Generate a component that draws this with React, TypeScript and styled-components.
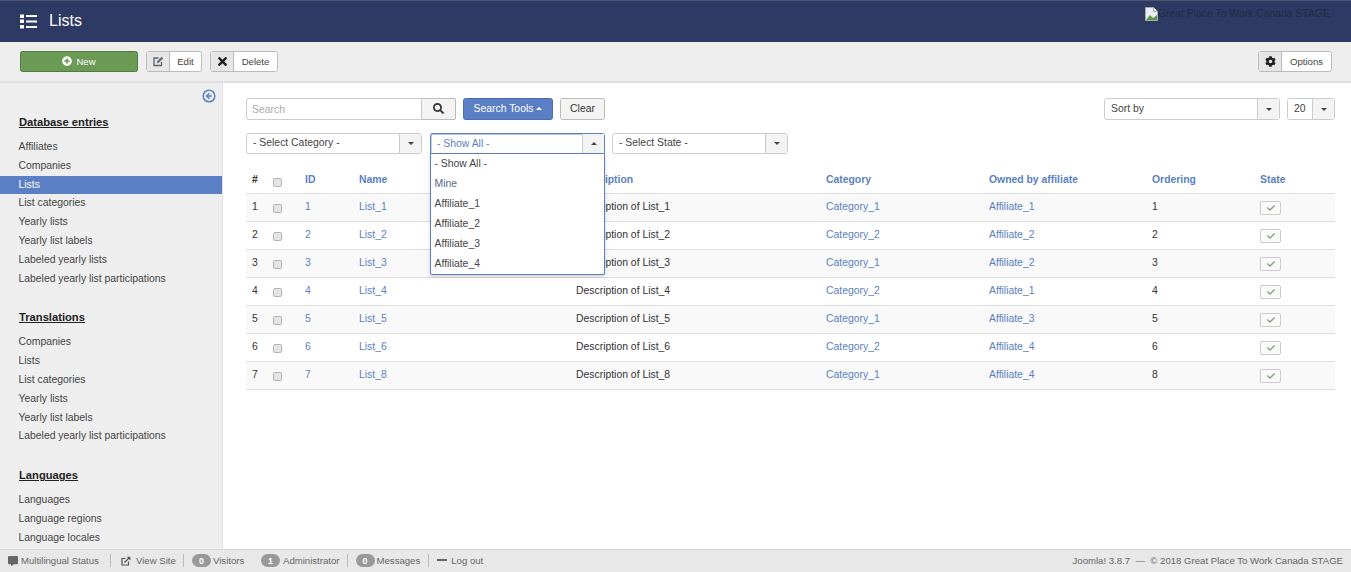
import React from "react";
import styled, { createGlobalStyle } from "styled-components";
import { FaCheck, FaCog, FaCommentAlt, FaPlusCircle, FaSearch, FaTimes } from "react-icons/fa";
import { ArrowLeftCircle } from "lucide-react";

const Global = createGlobalStyle`
  html, body { margin: 0; padding: 0; background: #fff; }
  body { font-family: "Liberation Sans", Arial, sans-serif; font-size: 10.4px; color: #333; }
  * { box-sizing: border-box; }
`;
const Page = styled.div`
  width: 1351px; height: 572px; overflow: hidden;
  display: grid; grid-template-rows: 42px 41px 1fr 23px;
`;
const Header = styled.header`
  background: #2d3a63; border-top: 1px solid #4d5672;
  display: flex; justify-content: space-between; align-items: flex-start;
  padding: 0 21px 0 20px; color: #fff;
`;
const Title = styled.div`display: flex; align-items: center; gap: 12px; font-size: 16px; height: 40px;`;
const Logo = styled.div`
  display: flex; align-items: center; margin-top: 6px; color: #232b47; font-size: 10.4px; line-height: 14px; white-space: nowrap;
`;
const Toolbar = styled.div`
  background: #eee; border-bottom: 2px solid #e0e0e0; display: flex; align-items: center;
  padding: 0 19px 1px 20px; gap: 8px;
`;
const NewButton = styled.div`
  width: 118px; height: 21px; background: #6a9a53; border: 1px solid #4e7d3c; border-radius: 2.5px;
  display: flex; align-items: center; justify-content: center; gap: 4px; color: #fff; font-size: 9.6px;
`;
const ToolButton = styled.div<{ $last?: boolean }>`
  display: flex; height: 21px; background: #fff; border: 1px solid #bbb; border-radius: 2.5px;
  font-size: 9.6px; color: #444; ${p => p.$last ? "margin-left: auto;" : ""}
`;
const ToolIcon = styled.span<{ $w: number }>`
  width: ${p => p.$w}px; background: #e6e6e6; border-right: 1px solid #bbb; display: flex; align-items: center; justify-content: center; color: #444;
`;
const ToolLabel = styled.span<{ $w: number }>`width: ${p => p.$w}px; display: flex; align-items: center; justify-content: center;`;
const Body = styled.div`display: flex; min-height: 0;`;
const Sidebar = styled.aside`
  position: relative; width: 223px; flex: none; background: #eee; border-right: 1px solid #e2e2e2; padding-top: 31px; overflow: hidden;
`;
const Collapse = styled.span`position: absolute; left: 202px; top: 6px; color: #5a7fc4; display: flex;`;
const SideHeading = styled.div<{ $first?: boolean }>`
  font-weight: bold; font-size: 11.2px; line-height: 16px; text-decoration: underline; color: #222; padding-left: 19px; margin-bottom: 8px;
  margin-top: ${p => p.$first ? 0 : 21}px;
`;
const SideItem = styled.div<{ $active?: boolean }>`
  height: 18.8px; line-height: 18.8px; padding-left: 18.5px; color: ${p => p.$active ? "#fff" : "#444"};
  background: ${p => p.$active ? "#5a7fc4" : "transparent"};
`;
const Content = styled.main`position: relative; flex: 1; padding: 15px 16px 0 23px; min-width: 0;`;
const Row = styled.div<{ $spaced?: boolean }>`display: flex; align-items: flex-start; ${p => p.$spaced ? "margin-top: 13px;" : ""}`;
const SearchInput = styled.div`
  width: 176px; height: 22px; border: 1px solid #ccc; border-radius: 2.5px 0 0 2.5px; background: #fff;
  color: #aaa; padding-left: 5px; line-height: 21px;
`;
const SearchBtn = styled.div`
  width: 34px; height: 22px; background: #f3f3f3; border: 1px solid #bbb; border-left: none; border-radius: 0 2.5px 2.5px 0;
  display: flex; align-items: center; justify-content: center; color: #333; margin-right: 7px; padding-bottom: 2px;
`;
const PrimaryBtn = styled.div`
  width: 90px; height: 22px; background: #5a7fc4; border: 1px solid #4a6fb4; border-radius: 2.5px; color: #fff;
  display: flex; align-items: center; justify-content: center; gap: 3px; margin-right: 7px; padding-bottom: 2px;
`;
const UpCaret = styled.i<{ $color?: string }>`
  width: 0; height: 0; border-left: 3px solid transparent; border-right: 3px solid transparent; border-bottom: 3px solid ${p => p.$color || "#fff"};
`;
const DownCaret = styled.i`
  width: 0; height: 0; border-left: 3.5px solid transparent; border-right: 3.5px solid transparent; border-top: 3.5px solid #444;
`;
const ClearBtn = styled.div`
  width: 45px; height: 22px; background: #f3f3f3; border: 1px solid #bbb; border-radius: 2.5px; display: flex; align-items: center; justify-content: center; color: #333; padding-bottom: 2px;
`;
const Select = styled.div<{ $w: number; $open?: boolean; $ml?: number; $h?: number }>`
  position: relative; width: ${p => p.$w}px; height: ${p => p.$h || 21}px; display: flex; background: #fff; border-radius: 2.5px;
  border: 1px solid ${p => p.$open ? "#5a7fc4" : "#ccc"}; margin-left: ${p => p.$ml || 0}px; color: ${p => p.$open ? "#5a7fc4" : "#444"};
  ${p => p.$open ? "border-bottom-left-radius:0;border-bottom-right-radius:0;box-shadow:inset 0 1px 0 rgba(90,127,196,.45),inset 1px 0 0 rgba(90,127,196,.35);" : ""}
`;
const SelectText = styled.span<{ $low?: boolean }>`flex: 1; padding-left: 6px; line-height: ${p => p.$low ? 20 : 18}px;`;
const SelectArrow = styled.span<{ $w?: number }>`
  width: ${p => p.$w || 22}px; background: #f3f3f3; border-left: 1px solid #ccc; display: flex; align-items: center; justify-content: center;
`;
const Menu = styled.div`
  position: absolute; left: -1px; top: 20px; width: 175px; height: 121px; background: #fff; border: 1px solid #5a7fc4; border-top: none;
  border-radius: 0 0 2.5px 2.5px; box-shadow: 0 2px 4px rgba(0,0,0,.15); z-index: 2; color: #444;
`;
const MenuItem = styled.div<{ $blue?: boolean }>`height: 20px; line-height: 20px; padding-left: 3.5px; color: ${p => p.$blue ? "#56678f" : "#444"};`;
const Table = styled.table`
  width: 1089px; table-layout: fixed; border-collapse: collapse; margin-top: 15px; font-size: 10.4px; color: #333;
  th { height: 24px; text-align: left; font-weight: bold; color: #5a7fc4; padding: 0 6px 2px; }
  th:first-child { color: #333; }
  td { height: 28px; padding: 0 6px 2px; border-top: 1px solid #ddd; color: #333; }
  tr:last-child td { border-bottom: 1px solid #ddd; }
  tbody tr:nth-child(odd) td { background: #f9f9f9; }
  a { color: #5a7fc4; }
`;
const Check = styled.span`
  display: block; width: 9px; height: 9px; margin: 5px 0 0 0; background: #e4e4e4; border: 1px solid #b5b5b5; border-radius: 2px;
`;
const StateBtn = styled.span`
  display: flex; width: 21px; height: 14px; margin-top: 4px; border: 1px solid #ccc; border-radius: 2px; background: #fafafa; color: #8aa582;
  align-items: center; justify-content: center;
`;
const Footer = styled.footer`
  background: #e8e8e8; border-top: 1px solid #d8d8d8; display: flex; align-items: center; padding: 0 8px 1px 8px; color: #666; font-size: 9.6px; white-space: nowrap;
`;
const FootItem = styled.span<{ $sep?: boolean; $w?: number; $pl?: number; $pr?: number; $gap?: number }>`
  display: flex; align-items: center; gap: ${p => p.$gap ?? 3}px; height: 13px;
  padding-left: ${p => p.$pl || 0}px; padding-right: ${p => p.$pr || 0}px;
  ${p => p.$w ? `width: ${p.$w}px;` : ""}
  ${p => p.$sep ? "border-right: 1px solid #bbb;" : ""}
`;
const Badge = styled.span`
  width: 19px; height: 13px; border-radius: 7px; background: #999; color: #fff; font-weight: bold; font-size: 8.8px;
  display: flex; align-items: center; justify-content: center; flex: none;
`;
const Dash = styled.i`width: 10px; height: 2px; background: #666; display: block; margin-top: -2px;`;
const Copy = styled.span`margin-left: auto;`;

const ListIcon = () => (
  <svg width="17" height="15" viewBox="0 0 17 15" fill="#fff">
    <rect x="0" y="0.5" width="4" height="3.5" /><rect x="0" y="5.5" width="4" height="3.5" /><rect x="0" y="11" width="4" height="3.5" />
    <rect x="6" y="1" width="11" height="2" /><rect x="6" y="6.5" width="11" height="2" /><rect x="6" y="12" width="11" height="2" />
  </svg>
);
const BrokenImg = () => (
  <svg width="13" height="14" viewBox="0 0 13 14">
    <path d="M.5.5h8l4 4v9H.5z" fill="#e8eef8" stroke="#a8a8a8" />
    <path d="M8.5.5v4h4" fill="#fff" stroke="#a8a8a8" />
    <path d="M1 13l4-5 3 3 4-3v5z" fill="#5f9a4a" />
  </svg>
);
const EditIcon = () => (
  <svg width="11" height="11" viewBox="0 0 11 11" fill="none" stroke="#5c6675">
    <path d="M8.5 6v3.5h-7.5v-7.5h4.5" strokeWidth="1.3" />
    <path d="M4 7l.4-1.8L8.6 1l1.4 1.4L5.8 6.6z" fill="#5c6675" strokeWidth=".4" />
  </svg>
);
const ViewSiteIcon = () => (
  <svg width="10" height="10" viewBox="0 0 10 10" fill="none" stroke="#555">
    <path d="M7.5 5.5v3.5H1V2.5h3.5" strokeWidth="1.2" />
    <path d="M3.5 6.5L8.5 1.5" strokeWidth="1.3" />
    <path d="M5.8 .8h3.6v3.6z" fill="#555" stroke="none" />
  </svg>
);

const rows = [
  [1, 1, "List_1", "Description of List_1", "Category_1", "Affiliate_1", 1],
  [2, 2, "List_2", "Description of List_2", "Category_2", "Affiliate_2", 2],
  [3, 3, "List_3", "Description of List_3", "Category_1", "Affiliate_2", 3],
  [4, 4, "List_4", "Description of List_4", "Category_2", "Affiliate_1", 4],
  [5, 5, "List_5", "Description of List_5", "Category_1", "Affiliate_3", 5],
  [6, 6, "List_6", "Description of List_6", "Category_2", "Affiliate_4", 6],
  [7, 7, "List_8", "Description of List_8", "Category_1", "Affiliate_4", 8],
];
const cols = [21, 32, 54, 217, 250, 163, 163, 108, 81];

export default function App() {
  return (
    <Page>
      <Global />
      <Header>
        <Title><ListIcon />Lists</Title>
        <Logo><BrokenImg />Great Place To Work Canada STAGE</Logo>
      </Header>
      <Toolbar>
        <NewButton><FaPlusCircle size={10} />New</NewButton>
        <ToolButton><ToolIcon $w={23}><EditIcon /></ToolIcon><ToolLabel $w={31}>Edit</ToolLabel></ToolButton>
        <ToolButton><ToolIcon $w={23}><FaTimes size={13} color="#222" /></ToolIcon><ToolLabel $w={43}>Delete</ToolLabel></ToolButton>
        <ToolButton $last><ToolIcon $w={23}><FaCog size={11} color="#222" /></ToolIcon><ToolLabel $w={49}>Options</ToolLabel></ToolButton>
      </Toolbar>
      <Body>
        <Sidebar>
          <Collapse><ArrowLeftCircle size={14} strokeWidth={2.6} /></Collapse>
          <SideHeading $first>Database entries</SideHeading>
          <SideItem>Affiliates</SideItem>
          <SideItem>Companies</SideItem>
          <SideItem $active>Lists</SideItem>
          <SideItem>List categories</SideItem>
          <SideItem>Yearly lists</SideItem>
          <SideItem>Yearly list labels</SideItem>
          <SideItem>Labeled yearly lists</SideItem>
          <SideItem>Labeled yearly list participations</SideItem>
          <SideHeading>Translations</SideHeading>
          <SideItem>Companies</SideItem>
          <SideItem>Lists</SideItem>
          <SideItem>List categories</SideItem>
          <SideItem>Yearly lists</SideItem>
          <SideItem>Yearly list labels</SideItem>
          <SideItem>Labeled yearly list participations</SideItem>
          <SideHeading>Languages</SideHeading>
          <SideItem>Languages</SideItem>
          <SideItem>Language regions</SideItem>
          <SideItem>Language locales</SideItem>
        </Sidebar>
        <Content>
          <Row>
            <SearchInput>Search</SearchInput>
            <SearchBtn><FaSearch size={11} /></SearchBtn>
            <PrimaryBtn>Search Tools <UpCaret /></PrimaryBtn>
            <ClearBtn>Clear</ClearBtn>
            <Select $w={176} $h={22} $ml={499}><SelectText $low>Sort by</SelectText><SelectArrow><DownCaret /></SelectArrow></Select>
            <Select $w={48} $h={22} $ml={7}><SelectText $low>20</SelectText><SelectArrow><DownCaret /></SelectArrow></Select>
          </Row>
          <Row $spaced>
            <Select $w={176}><SelectText>- Select Category -</SelectText><SelectArrow><DownCaret /></SelectArrow></Select>
            <Select $w={175} $ml={8} $open>
              <SelectText $low>- Show All -</SelectText><SelectArrow><UpCaret $color="#444" /></SelectArrow>
              <Menu>
                <MenuItem>- Show All -</MenuItem>
                <MenuItem $blue>Mine</MenuItem>
                <MenuItem>Affiliate_1</MenuItem>
                <MenuItem>Affiliate_2</MenuItem>
                <MenuItem>Affiliate_3</MenuItem>
                <MenuItem>Affiliate_4</MenuItem>
              </Menu>
            </Select>
            <Select $w={176} $ml={7}><SelectText>- Select State -</SelectText><SelectArrow><DownCaret /></SelectArrow></Select>
          </Row>
          <Table>
            <colgroup>{cols.map((w, i) => <col key={i} style={{ width: w }} />)}</colgroup>
            <thead>
              <tr>
                <th>#</th><th><Check /></th><th>ID</th><th>Name</th><th>Description</th><th>Category</th><th>Owned by affiliate</th><th>Ordering</th><th>State</th>
              </tr>
            </thead>
            <tbody>
              {rows.map(r => (
                <tr key={r[0]}>
                  <td>{r[0]}</td><td><Check /></td><td><a>{r[1]}</a></td><td><a>{r[2]}</a></td><td>{r[3]}</td>
                  <td><a>{r[4]}</a></td><td><a>{r[5]}</a></td><td>{r[6]}</td>
                  <td><StateBtn><FaCheck size={8} /></StateBtn></td>
                </tr>
              ))}
            </tbody>
          </Table>
        </Content>
      </Body>
      <Footer>
        <FootItem $sep $w={103}><FaCommentAlt size={10} />Multilingual Status</FootItem>
        <FootItem $sep $w={73} $pl={10} $gap={5}><ViewSiteIcon />View Site</FootItem>
        <FootItem $w={77} $pl={8} $gap={2}><Badge>0</Badge>Visitors</FootItem>
        <FootItem $sep $pr={7}><Badge>1</Badge>Administrator</FootItem>
        <FootItem $sep $pl={8} $pr={8} $gap={2}><Badge>0</Badge>Messages</FootItem>
        <FootItem $pl={8} $gap={4}><Dash />Log out</FootItem>
        <Copy>Joomla! 3.8.7 &nbsp;—&nbsp; © 2018 Great Place To Work Canada STAGE</Copy>
      </Footer>
    </Page>
  );
}
